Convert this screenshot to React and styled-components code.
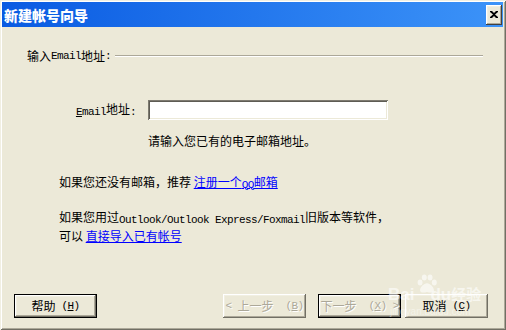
import React from 'react'
import styled, { createGlobalStyle, css } from 'styled-components'

const Global = createGlobalStyle`
  html, body { margin: 0; padding: 0; background: #ece9d8; }
  #root { width: 506px; height: 330px; }
`

const cjk = `"Noto Sans CJK SC", "Noto Sans", sans-serif`

const Window = styled.div`
  position: relative;
  width: 506px;
  height: 330px;
  box-sizing: border-box;
  display: flex;
  flex-direction: column;
  background: #ece9d8;
  font-family: ${cjk};
  font-size: 12px;
  line-height: 16px;
  color: #000;
  overflow: hidden;
  box-shadow: inset 1px 1px #f1efe2, inset -1px -1px #716f64,
    inset 2px 2px #fff, inset -2px -2px #aca899;
`

const TitleBar = styled.div`
  margin: 2px 3px 0 2px;
  height: 25px;
  display: flex;
  align-items: center;
  justify-content: space-between;
  padding: 0 1px 0 2px;
  background: linear-gradient(to right, #0a5be2, #3c93f8);
`

const Title = styled.div`
  color: #fff;
  font-weight: 900;
  font-size: 14px;
  line-height: 16px;
`

const CloseButton = styled.div`
  width: 16px;
  height: 20px;
  background: #ece9d8;
  display: flex;
  align-items: center;
  justify-content: center;
  box-shadow: inset -1px -1px #404040, inset 1px 1px #fff,
    inset -2px -2px #aca899, inset 2px 2px #f1efe2;
`

const Body = styled.div`
  flex: 1;
  display: flex;
  flex-direction: column;
`

// SimSun-like latin: 6px per character
const Latin = styled.span`
  font-family: "Liberation Mono", monospace;
  font-size: 11px;
  letter-spacing: -0.6px;
  vertical-align: -1px;
`

const Key = styled.span`
  text-decoration: underline;
`

const SectionHead = styled.div`
  margin-top: 21px;
  padding: 0 23px 0 27px;
  display: flex;
  align-items: center;
  white-space: nowrap;
`

const Rule = styled.div`
  flex: 1;
  margin-left: 4px;
  border-top: 1px solid #aca899;
  border-bottom: 1px solid #fff;
`

const FieldRow = styled.div`
  margin-top: 36px;
  display: flex;
  align-items: center;
  height: 20px;
`

const FieldLabel = styled.label`
  width: 136px;
  margin-right: 12px;
  text-align: right;
  white-space: nowrap;
`

const TextInput = styled.input`
  box-sizing: border-box;
  width: 240px;
  height: 20px;
  margin: 0;
  padding: 2px 3px;
  border: none;
  outline: none;
  background: #fff;
  box-shadow: inset 1px 1px #7d7a70, inset -1px -1px #fff,
    inset 2px 2px #5e5c54, inset -2px -2px #ece9d8;
`

const Line = styled.div`
  margin-top: ${p => p.$gap || 0}px;
  padding-left: ${p => p.$indent}px;
  white-space: nowrap;
`

const Link = styled.a`
  color: #0000ff;
  text-decoration: underline;
  cursor: pointer;
`

const Footer = styled.div`
  margin-top: auto;
  padding: 0 18px 12px 14px;
  display: flex;
  align-items: center;
`

const Spacer = styled.div`
  flex: 1;
`

const Button = styled.div`
  box-sizing: border-box;
  width: 83px;
  height: 24px;
  margin-left: ${p => p.$gap || 0}px;
  display: flex;
  align-items: center;
  justify-content: center;
  white-space: nowrap;
  background: #ece9d8;
  box-shadow: inset -1px -1px #716f64, inset 1px 1px #fff,
    inset -2px -2px #aca899, inset 2px 2px #f1efe2;
  ${p => p.$default && css`
    border: 1px solid #000;
  `}
  ${p => p.$disabled && css`
    color: #aca899;
    text-shadow: 1px 1px #fff;
  `}
`

const Watermark = styled.div`
  position: absolute;
  left: 386px;
  top: 272px;
  width: 110px;
  height: 48px;
  pointer-events: none;
`

const MarkWord = styled.div`
  position: absolute;
  left: 2px;
  top: 13px;
  display: flex;
  align-items: baseline;
  white-space: nowrap;
  color: rgba(255, 255, 255, 0.6);
  font-family: "Liberation Sans", sans-serif;
  font-weight: 700;
  font-size: 17px;
  line-height: 18px;
`

const MarkGap = styled.span`
  display: inline-block;
  width: ${p => p.$w}px;
`

const MarkCn = styled.span`
  font-family: ${cjk};
  font-size: 15px;
  font-weight: 700;
`

const MarkUrl = styled.div`
  position: absolute;
  left: 4px;
  top: 34px;
  white-space: nowrap;
  font-family: "Liberation Sans", sans-serif;
  font-size: 10px;
  line-height: 12px;
  color: rgba(255, 255, 255, 0.45);
`

const Paw = () => (
  <svg width="22" height="20" viewBox="0 0 28 26" style={{ position: 'absolute', left: 30, top: 2 }}>
    <g fill="rgba(255,255,255,0.6)">
      <ellipse cx="5" cy="11" rx="3.2" ry="3.8" />
      <ellipse cx="10.5" cy="4.5" rx="3.2" ry="3.8" />
      <ellipse cx="18" cy="4.5" rx="3.2" ry="3.8" />
      <ellipse cx="23.5" cy="11" rx="3.2" ry="3.8" />
      <path d="M14 12c-4 0-9 5-9 9 0 3 3 4 9 2.5 6 1.5 9 0.5 9-2.5 0-4-5-9-9-9z" />
    </g>
  </svg>
)

export default function App() {
  return (
    <>
      <Global />
      <Window>
        <TitleBar>
          <Title>新建帐号向导</Title>
          <CloseButton>
            <svg width="8" height="7" viewBox="0 0 8 7">
              <path d="M0 0h2l2 2 2-2h2v1L5 3.5 8 6v1H6L4 5 2 7H0V6l3-2.5L0 1z" fill="#000" />
            </svg>
          </CloseButton>
        </TitleBar>
        <Body>
          <SectionHead>
            输入<Latin>Email</Latin>地址<Latin>:</Latin>
            <Rule />
          </SectionHead>
          <FieldRow>
            <FieldLabel htmlFor="email">
              <Latin><Key>E</Key>mail</Latin>地址<Latin>:</Latin>
            </FieldLabel>
            <TextInput id="email" type="text" />
          </FieldRow>
          <Line $gap={13} $indent={148}>请输入您已有的电子邮箱地址。</Line>
          <Line $gap={25} $indent={59}>
            如果您还没有邮箱，推荐 <Link>注册一个<Latin>QQ</Latin>邮箱</Link>
          </Line>
          <Line $gap={16} $indent={59}>
            如果您用过<Latin>Outlook/Outlook Express/Foxmail</Latin>旧版本等软件，
          </Line>
          <Line $indent={59}>
            可以 <Link>直接导入已有帐号</Link>
          </Line>
          <Footer>
            <Button $default>帮助<Latin>&nbsp;(<Key>H</Key>)</Latin></Button>
            <Spacer />
            <Button $disabled><Latin>&lt;&nbsp;</Latin>上一步<Latin>&nbsp;&nbsp;(<Key>B</Key>)</Latin></Button>
            <Button $disabled $default $gap={12}>下一步<Latin>&nbsp;&nbsp;(<Key>X</Key>)&nbsp;&gt;</Latin></Button>
            <Button $gap={4}>取消<Latin>&nbsp;(<Key>C</Key>)</Latin></Button>
          </Footer>
        </Body>
        <Watermark>
          <Paw />
          <MarkWord>Bai<MarkGap $w={16} />du<MarkCn>经验</MarkCn></MarkWord>
          <MarkUrl>jingyan.baidu.com</MarkUrl>
        </Watermark>
      </Window>
    </>
  )
}
